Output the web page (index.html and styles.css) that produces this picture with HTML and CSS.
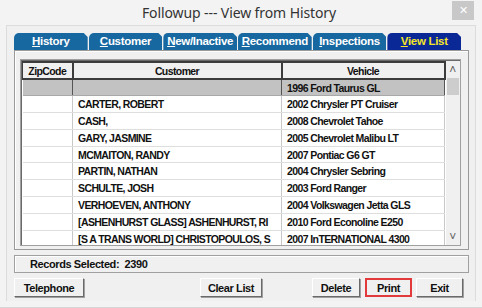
FILE: index.html
```html
<!DOCTYPE html>
<html lang="en">
    <head>
        <meta charset="UTF-8" />
        <title>Followup --- View from History</title>
        <link rel="stylesheet" href="styles.css">
    </head>
    <body>
        <div class="window">
            <div class="titlebar">
                <span></span>
                <span class="title">Followup --- View from History</span>
                <span class="close">&#x2715;</span>
            </div>
            <div class="client">
                <div class="tabs">
                    <div class="tab"><u>H</u>istory</div>
                    <div class="tab"><u>C</u>ustomer</div>
                    <div class="tab"><u>N</u>ew/Inactive</div>
                    <div class="tab"><u>R</u>ecommend</div>
                    <div class="tab"><u>I</u>nspections</div>
                    <div class="tab active"><u>V</u>iew List</div>
                </div>
                <div class="panel">
                    <div class="grid">
                        <table class="list">
                            <colgroup>
                                <col class="c-zip">
                                <col class="c-cust">
                                <col class="c-veh">
                            </colgroup>
                            <thead>
                                <tr><th>ZipCode</th><th>Customer</th><th>Vehicle</th></tr>
                            </thead>
                            <tbody>
                                <tr class="sel"><td></td><td></td><td>1996 Ford Taurus GL</td></tr>
                                <tr><td></td><td>CARTER, ROBERT</td><td>2002 Chrysler PT Cruiser</td></tr>
                                <tr><td></td><td>CASH,</td><td>2008 Chevrolet Tahoe</td></tr>
                                <tr><td></td><td>GARY, JASMINE</td><td>2005 Chevrolet Malibu LT</td></tr>
                                <tr><td></td><td>MCMAITON, RANDY</td><td>2007 Pontiac G6 GT</td></tr>
                                <tr><td></td><td>PARTIN, NATHAN</td><td>2004 Chrysler Sebring</td></tr>
                                <tr><td></td><td>SCHULTE, JOSH</td><td>2003 Ford Ranger</td></tr>
                                <tr><td></td><td>VERHOEVEN, ANTHONY</td><td>2004 Volkswagen Jetta GLS</td></tr>
                                <tr><td></td><td>[ASHENHURST GLASS] ASHENHURST, RI</td><td>2010 Ford Econoline E250</td></tr>
                                <tr><td></td><td>[S A TRANS WORLD] CHRISTOPOULOS, S</td><td>2007 InTERNATIONAL 4300</td></tr>
                            </tbody>
                        </table>
                        <div class="scrollbar">
                            <span class="arrow">&#x2C4;</span>
                            <span class="thumb"></span>
                            <span class="track"></span>
                            <span class="arrow">&#x2C5;</span>
                        </div>
                    </div>
                </div>
                <div class="status">Records Selected:&nbsp; 2390</div>
                <div class="buttons">
                    <button class="btn btn-tel">Telephone</button>
                    <button class="btn btn-clear">Clear List</button>
                    <button class="btn btn-delete">Delete</button>
                    <button class="btn btn-print">Print</button>
                    <button class="btn btn-exit">Exit</button>
                </div>
            </div>
        </div>
    </body>
</html>
```

FILE: styles.css
```css
* {
    margin: 0;
    padding: 0;
    box-sizing: border-box;
}

body {
    background: #f3f3f3;
    font-family: "Liberation Sans", Arial, sans-serif;
}

.window {
    width: 482px;
    height: 308px;
    border-bottom: 1px solid #d6d6d6;
}

.titlebar {
    display: grid;
    grid-template-columns: 1fr auto 1fr;
    align-items: center;
    height: 25px;

    .title {
        font-family: "Noto Sans", sans-serif;
        font-size: 14px;
        color: #333;
        letter-spacing: -0.1px;
        margin-left: -4px;
    }

    .close {
        justify-self: end;
        width: 22px;
        height: 19px;
        margin: 0 8px 4px 0;
        background: #c8c8c8;
        color: #fff;
        font-size: 11px;
        text-align: center;
        line-height: 19px;
    }
}

.client {
    height: 276px;
    margin: 0 6px;
    padding: 7px 6px 0 7px;
    background: #f0f0f0;
    border: 1px solid #dcdcdc;
    border-bottom: 0;
}

.tabs {
    display: flex;
    gap: 1px;
    height: 17px;
    width: 447px;

    .tab {
        flex: 1;
        background: #1768a0;
        color: #fff;
        font-size: 11.5px;
        font-weight: bold;
        letter-spacing: -0.3px;
        text-align: center;
        line-height: 17px;
        border-top-left-radius: 5px;
        clip-path: polygon(0 0, calc(100% - 4px) 0, 100% 4px, 100% 100%, 0 100%);
    }

    .active {
        background: #0a2896;
        color: #f4e52a;
    }
}

.panel {
    height: 200px;
    padding: 8px 0 0 5px;
    border: 1px solid #9a9a9a;
    box-shadow: inset 1px 1px 0 #fff;
}

.grid {
    display: flex;
    width: 441px;
    height: 187px;
    overflow: hidden;
    background: #fff;
    border: 1px solid #a0a0a0;
    box-shadow: inset 1px 1px 0 #6a6a6a;
    padding: 1px 0 0 1px;
}

.list {
    border-collapse: collapse;
    table-layout: fixed;
    width: 422px;
    height: 0;
    font-size: 10.5px;
    font-weight: bold;
    letter-spacing: -0.6px;
    color: #111;

    .c-zip { width: 50px; }
    .c-cust { width: 209px; }
    .c-veh { width: 163px; }

    th {
        height: 17px;
        background: #f0f0f0;
        border: 2px solid #3c3c3c;
        border-left-width: 1px;
        text-align: center;
        font-weight: bold;
    }

    td {
        height: 16.8px;
        padding-left: 5px;
        white-space: nowrap;
        overflow: hidden;
        border-right: 1px solid #c8c8c8;
        border-bottom: 1px solid #dedede;
    }

    .sel td {
        background: #c2c2c2;
        border-bottom-color: #a8a8a8;
        border-right-color: #555;
    }
}

.scrollbar {
    display: flex;
    flex-direction: column;
    width: 17px;
    background: #f0f0f0;
    color: #606060;
    font-size: 12px;

    .arrow {
        height: 17px;
        text-align: center;
        line-height: 18px;
    }

    .thumb {
        height: 17px;
        margin: 0 1px;
        background: #cdcdcd;
    }

    .track {
        flex: 1;
    }
}

.status {
    height: 18px;
    margin-top: 5px;
    padding-left: 15px;
    border: 1px solid #a0a0a0;
    box-shadow: inset 1px 1px 0 #fff;
    font-size: 11px;
    font-weight: bold;
    letter-spacing: -0.4px;
    line-height: 16px;
    color: #111;
}

.buttons {
    display: flex;
    margin-top: 5px;
    height: 19px;

    .btn {
        height: 19px;
        background: #f0f0f0;
        border: 1px solid #fff;
        border-right-color: #6a6a6a;
        border-bottom-color: #6a6a6a;
        box-shadow: 1px 1px 0 #a0a0a0;
        font-family: "Liberation Sans", Arial, sans-serif;
        font-size: 11px;
        font-weight: bold;
        letter-spacing: -0.4px;
        color: #111;
    }

    .btn-tel { width: 70px; }
    .btn-clear { width: 62px; margin-left: 116px; }
    .btn-delete { width: 48px; margin-left: 50px; }
    .btn-print {
        width: 47px;
        margin-left: 5px;
        border: 2px solid #e2393a;
        box-shadow: none;
    }
    .btn-exit { width: 47px; margin-left: 4px; }
}
```
